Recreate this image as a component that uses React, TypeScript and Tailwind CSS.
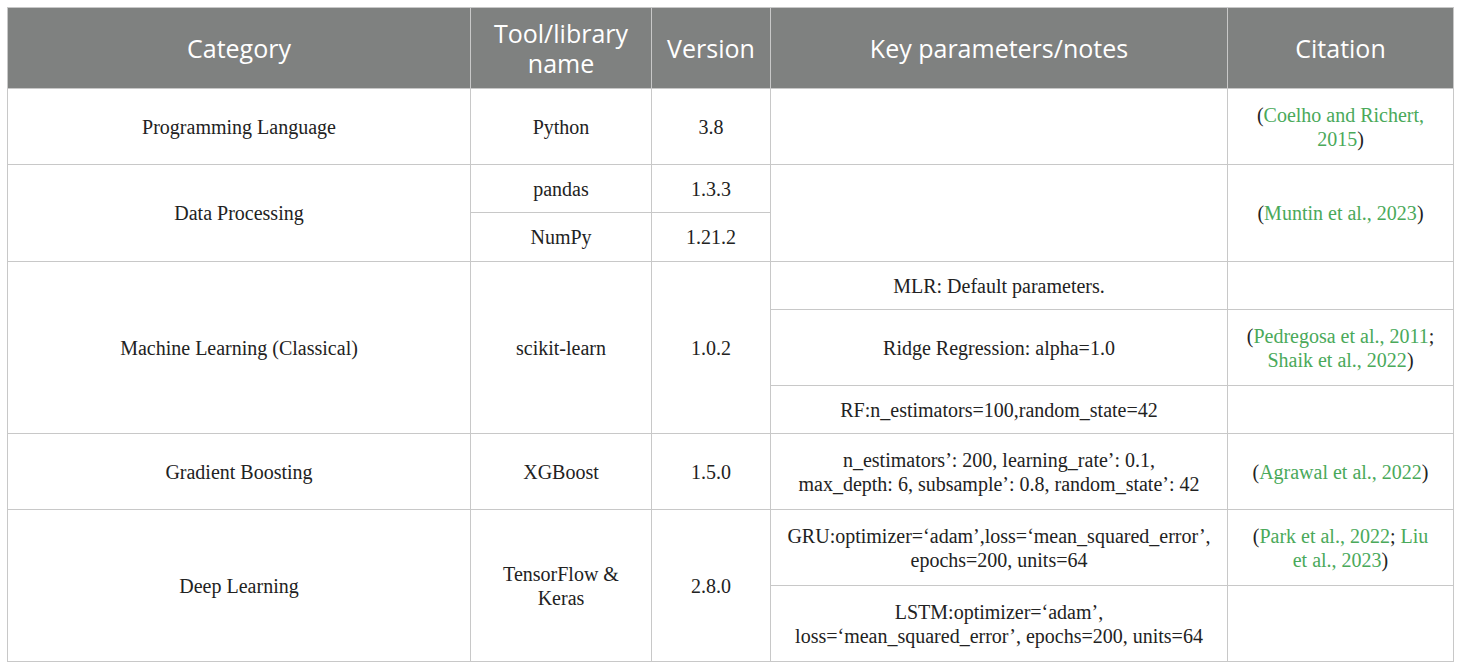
const serif = { fontFamily: '"Liberation Serif", "DejaVu Serif", serif' };

function Cite({ children }: { children: React.ReactNode }) {
  return <span className="text-[#4aa95a]">{children}</span>;
}

const td = "border border-[#c8c8c8] px-3 text-center align-middle";
const th = "border border-[#c8c8c8] font-normal";

export default function App() {
  return (
    <div className="bg-white w-[1460px] h-[669px] pt-[7px] pl-[7px]">
      <table
        className="border-collapse table-fixed w-[1446px] text-[20px] leading-[24px] text-[#222]"
        style={serif}
      >
        <colgroup>
          <col className="w-[463px]" />
          <col className="w-[181px]" />
          <col className="w-[119px]" />
          <col className="w-[457px]" />
          <col className="w-[226px]" />
        </colgroup>
        <thead>
          <tr className="h-[81px] bg-[#7f8180] text-white text-[25px] leading-[30px] font-['Open_Sans',sans-serif]">
            <th className={th}>Category</th>
            <th className={th}>
              Tool/library
              <br />
              name
            </th>
            <th className={th}>Version</th>
            <th className={th}>Key parameters/notes</th>
            <th className={th}>Citation</th>
          </tr>
        </thead>
        <tbody>
          <tr className="h-[76px]">
            <td className={td}>Programming Language</td>
            <td className={td}>Python</td>
            <td className={td}>3.8</td>
            <td className={td}></td>
            <td className={td}>
              (<Cite>Coelho and Richert,</Cite>
              <br />
              <Cite>2015</Cite>)
            </td>
          </tr>
          <tr className="h-[48px]">
            <td className={td} rowSpan={2}>Data Processing</td>
            <td className={td}>pandas</td>
            <td className={td}>1.3.3</td>
            <td className={td} rowSpan={2}></td>
            <td className={td} rowSpan={2}>
              (<Cite>Muntin et al., 2023</Cite>)
            </td>
          </tr>
          <tr className="h-[49px]">
            <td className={td}>NumPy</td>
            <td className={td}>1.21.2</td>
          </tr>
          <tr className="h-[48px]">
            <td className={td} rowSpan={3}>Machine Learning (Classical)</td>
            <td className={td} rowSpan={3}>scikit-learn</td>
            <td className={td} rowSpan={3}>1.0.2</td>
            <td className={td}>MLR: Default parameters.</td>
            <td className={td}></td>
          </tr>
          <tr className="h-[76px]">
            <td className={td}>Ridge Regression: alpha=1.0</td>
            <td className={td}>
              (<Cite>Pedregosa et al., 2011</Cite>;
              <br />
              <Cite>Shaik et al., 2022</Cite>)
            </td>
          </tr>
          <tr className="h-[48px]">
            <td className={td}>RF:n_estimators=100,random_state=42</td>
            <td className={td}></td>
          </tr>
          <tr className="h-[76px]">
            <td className={td}>Gradient Boosting</td>
            <td className={td}>XGBoost</td>
            <td className={td}>1.5.0</td>
            <td className={td}>
              n_estimators’: 200, learning_rate’: 0.1,
              <br />
              max_depth: 6, subsample’: 0.8, random_state’: 42
            </td>
            <td className={td}>
              (<Cite>Agrawal et al., 2022</Cite>)
            </td>
          </tr>
          <tr className="h-[76px]">
            <td className={td} rowSpan={2}>Deep Learning</td>
            <td className={td} rowSpan={2}>
              TensorFlow &amp;
              <br />
              Keras
            </td>
            <td className={td} rowSpan={2}>2.8.0</td>
            <td className={td}>
              GRU:optimizer=‘adam’,loss=‘mean_squared_error’,
              <br />
              epochs=200, units=64
            </td>
            <td className={td}>
              (<Cite>Park et al., 2022</Cite>; <Cite>Liu</Cite>
              <br />
              <Cite>et al., 2023</Cite>)
            </td>
          </tr>
          <tr className="h-[76px]">
            <td className={td}>
              LSTM:optimizer=‘adam’,
              <br />
              loss=‘mean_squared_error’, epochs=200, units=64
            </td>
            <td className={td}></td>
          </tr>
        </tbody>
      </table>
    </div>
  );
}
